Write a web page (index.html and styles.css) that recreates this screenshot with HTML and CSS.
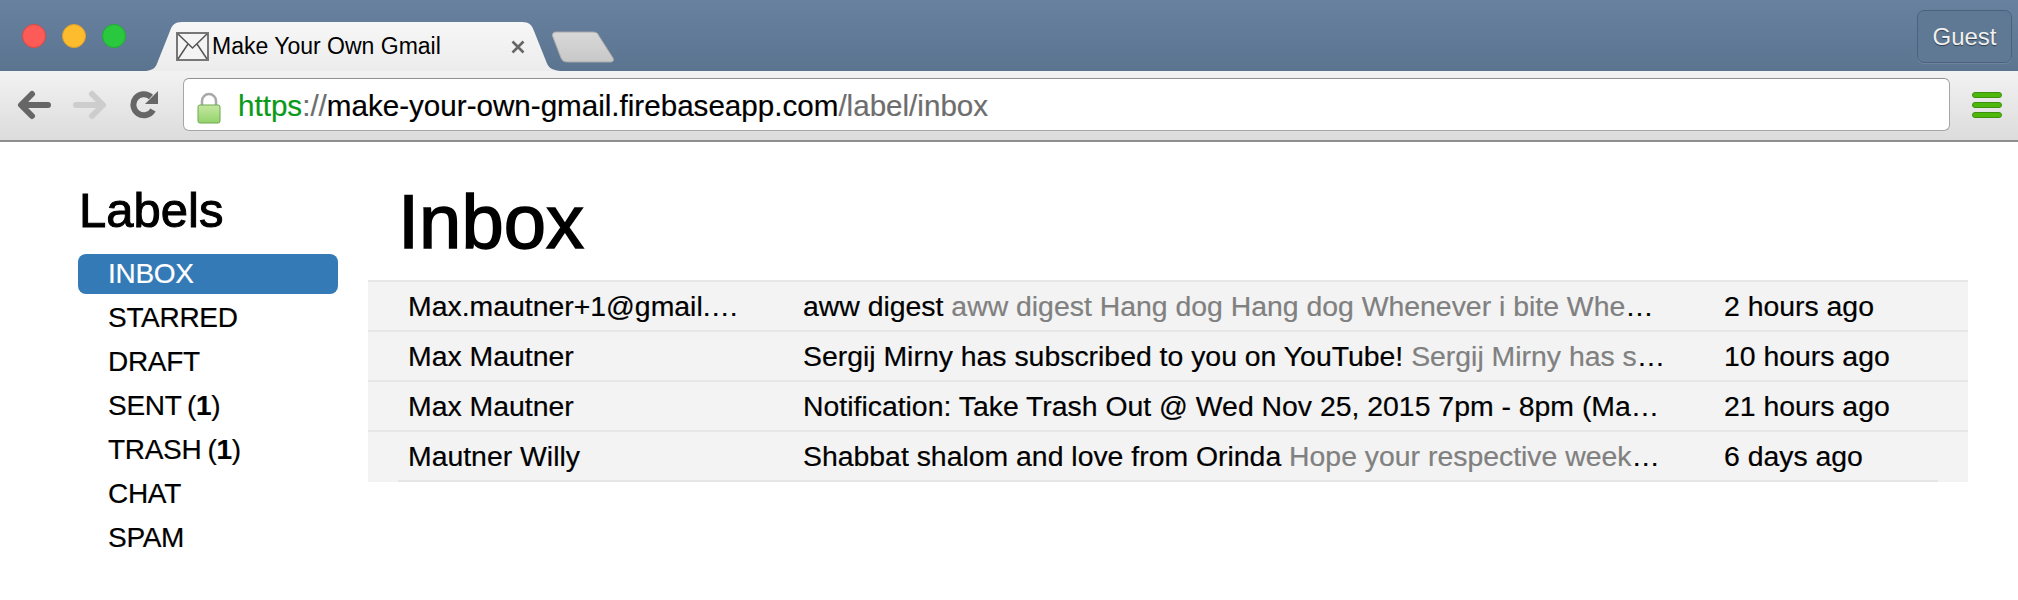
FILE: index.html
```html
<!DOCTYPE html>
<html lang="en">
<head>
    <meta charset="UTF-8">
    <title>Make Your Own Gmail</title>
    <link rel="stylesheet" href="styles.css">
</head>
<body>

    <!-- browser chrome -->
    <div class="tabstrip">
        <div class="traffic">
            <span class="light red"></span>
            <span class="light yellow"></span>
            <span class="light green"></span>
        </div>
        <div class="tab">
            <svg class="tab-shape" width="414" height="49" viewBox="0 0 414 49">
                <defs>
                    <linearGradient id="tabFill" x1="0" y1="0" x2="0" y2="1">
                        <stop offset="0" stop-color="#f7f7f7"/>
                        <stop offset="1" stop-color="#ececec"/>
                    </linearGradient>
                </defs>
                <path d="M0 49 C8 48 10 45 12 39 L24 9 C26 3 29 0 36 0 L376 0 C383 0 386 3 388 9 L400 39 C402 45 405 48 414 49 Z" fill="url(#tabFill)"/>
            </svg>
            <svg class="favicon" width="33" height="29" viewBox="0 0 33 29">
                <rect x="1" y="1" width="31" height="27" fill="#f4f4f4" stroke="#777" stroke-width="2"/>
                <path d="M2 2 L16.500 16 L31 2 M2 27 L12 12 M31 27 L21 12" fill="none" stroke="#555" stroke-width="1.500"/>
            </svg>
            <span class="tab-title">Make Your Own Gmail</span>
            <svg class="tab-close" width="14" height="14" viewBox="0 0 14 14">
                <path d="M1.500 1.500 L12.500 12.500 M12.500 1.500 L1.500 12.500" stroke="#666" stroke-width="2.600"/>
            </svg>
        </div>
        <svg class="newtab" width="64" height="32" viewBox="0 0 64 32">
            <defs>
                <linearGradient id="newTabFill" x1="0" y1="0" x2="0" y2="1">
                    <stop offset="0" stop-color="#d8d8d8"/>
                    <stop offset="1" stop-color="#c8c8c8"/>
                </linearGradient>
            </defs>
            <path d="M1.500 5 C1 2.500 2.500 1 5 1 L42 1 C45 1 47 2 48 5 L62 27 C63 30 62 31 59 31 L17 31 C13 31 11.500 30 10 27 Z" fill="url(#newTabFill)" stroke="#a9a9a9" stroke-width="1"/>
        </svg>
        <div class="guest">Guest</div>
    </div>

    <div class="toolbar">
        <svg class="nav-icon back" width="34" height="30" viewBox="0 0 34 30">
            <path d="M31 15 L6 15 M15 4 L4 15 L15 26" fill="none" stroke="#666" stroke-width="6" stroke-linecap="round" stroke-linejoin="round"/>
        </svg>
        <svg class="nav-icon forward" width="34" height="30" viewBox="0 0 34 30">
            <path d="M3 15 L28 15 M19 4 L30 15 L19 26" fill="none" stroke="#cdcdcd" stroke-width="6" stroke-linecap="round" stroke-linejoin="round"/>
        </svg>
        <svg class="nav-icon reload" width="30" height="32" viewBox="0 0 30 32">
            <path d="M23 21 A10.500 10.500 0 1 1 21 8" fill="none" stroke="#666" stroke-width="6"/>
            <path d="M28 2 L28 15 L15 15 Z" fill="#666"/>
        </svg>
        <div class="omnibox">
            <svg class="lock" width="24" height="32" viewBox="0 0 24 32">
                <defs>
                    <linearGradient id="lockFill" x1="0" y1="0" x2="0" y2="1">
                        <stop offset="0" stop-color="#c4e8a0"/>
                        <stop offset="1" stop-color="#94d36c"/>
                    </linearGradient>
                </defs>
                <path d="M5 14 L5 9 A7 7 0 0 1 19 9 L19 14" fill="none" stroke="#a9a9a9" stroke-width="2.500"/>
                <rect x="1" y="13" width="22" height="18" rx="2" fill="url(#lockFill)" stroke="#6fa850"/>
            </svg>
            <span class="url"><span class="url-https">https</span><span class="url-dim">://</span>make-your-own-gmail.firebaseapp.com<span class="url-dim">/label/inbox</span></span>
        </div>
        <div class="menu">
            <span></span>
            <span></span>
            <span></span>
        </div>
    </div>

    <!-- the app -->
    <div class="page">
        <div class="sidebar">
            <h3>Labels</h3>
            <ul class="labels">
                <li class="active">INBOX</li>
                <li>STARRED</li>
                <li>DRAFT</li>
                <li>SENT (<b>1</b>)</li>
                <li>TRASH (<b>1</b>)</li>
                <li>CHAT</li>
                <li>SPAM</li>
            </ul>
        </div>
        <div class="content">
            <h1>Inbox</h1>
            <div class="threads">
                <div class="thread">
                    <div class="sender">Max.mautner+1@gmail.com</div>
                    <div class="subject">aww digest <span class="snippet">aww digest Hang dog Hang dog Whenever i bite Whenever i bite my tongue</span></div>
                    <div class="time">2 hours ago</div>
                </div>
                <div class="thread">
                    <div class="sender">Max Mautner</div>
                    <div class="subject">Sergij Mirny has subscribed to you on YouTube! <span class="snippet">Sergij Mirny has subscribed to you on YouTube</span></div>
                    <div class="time">10 hours ago</div>
                </div>
                <div class="thread">
                    <div class="sender">Max Mautner</div>
                    <div class="subject">Notification: Take Trash Out @ Wed Nov 25, 2015 7pm - 8pm (Max Mautner)</div>
                    <div class="time">21 hours ago</div>
                </div>
                <div class="thread">
                    <div class="sender">Mautner Willy</div>
                    <div class="subject">Shabbat shalom and love from Orinda <span class="snippet">Hope your respective weekends are going well</span></div>
                    <div class="time">6 days ago</div>
                </div>
            </div>
        </div>
    </div>

</body>
</html>
```

FILE: styles.css
```css
* { margin: 0; padding: 0; box-sizing: border-box; }

body {
    background: #fff;
    color: #000;
    font-family: "Liberation Sans", Arial, sans-serif;
    overflow: hidden;
}

/* --- BROWSER CHROME --- */
.tabstrip {
    height: 71px;
    display: flex;
    background: linear-gradient(#67819f, #5b7490);
}

.traffic {
    display: flex;
    gap: 16px;
    padding: 24px 0 0 22px;
    width: 146px;
}

.light {
    width: 24px;
    height: 24px;
    border-radius: 50%;
}
.red { background: #fc5b57; border: 1px solid #e2463f; }
.yellow { background: #fdbc2e; border: 1px solid #e0a028; }
.green { background: #2ac83f; border: 1px solid #1fae2e; }

.tab {
    position: relative;
    width: 414px;
    height: 49px;
    margin-top: 22px;
    display: flex;
    align-items: center;
    padding-left: 30px;
    flex-shrink: 0;
}

.tab-shape { position: absolute; left: 0; top: 0; }

.favicon, .tab-title, .tab-close { position: relative; }

.tab-title {
    margin-left: 3px;
    width: 299px;
    font-size: 23px;
    white-space: nowrap;
}

.newtab { margin: 31px 0 0 -9px; flex-shrink: 0; }

.guest {
    margin: 10px 6px 0 auto;
    width: 95px;
    height: 53px;
    line-height: 51px;
    text-align: center;
    font-size: 24px;
    color: #f0f0f0;
    border: 1px solid #4a627e;
    border-radius: 7px;
    background: #5f7994;
    box-shadow: 0 1px 0 rgba(255, 255, 255, 0.12);
    text-shadow: 0 1px 1px rgba(0, 0, 0, 0.5);
}

.toolbar {
    height: 71px;
    display: flex;
    align-items: center;
    padding: 0 16px 2px 17px;
    background: linear-gradient(#f2f2f2, #dcdcdc);
    border-bottom: 2px solid #8e8e8e;
}

.nav-icon { flex-shrink: 0; }
.back { margin-right: 22px; }
.forward { margin-right: 23px; }
.reload { margin-right: 23px; }

.omnibox {
    width: 1767px;
    height: 53px;
    display: flex;
    align-items: center;
    padding-left: 13px;
    background: #fff;
    border: 1px solid #a6a6a6;
    border-top-color: #8f8f8f;
    border-radius: 6px;
}

.lock { flex-shrink: 0; margin-top: 6px; }

.url {
    margin: 2px 0 0 17px;
    font-size: 29.6px;
    white-space: nowrap;
    -webkit-text-stroke: 0.2px;
}
.url-https { color: #0a9a1a; }
.url-dim { color: #6d6d6d; }

.menu {
    margin-left: 22px;
    display: flex;
    flex-direction: column;
    gap: 4px;
}
.menu span {
    display: block;
    width: 30px;
    height: 6px;
    border-radius: 3px;
    background: #4db80a;
    border: 1px solid #3f8f10;
}

/* --- APP --- */
.page {
    display: flex;
    padding: 0 50px 0 78px;
}

.sidebar {
    width: 260px;
    flex-shrink: 0;
    margin-right: 30px;
}

.sidebar h3 {
    font-size: 49px;
    font-weight: 400;
    line-height: 52px;
    margin: 42px 0 18px 1px;
    -webkit-text-stroke: 1px;
}

.labels { list-style: none; }

.labels li {
    height: 40px;
    line-height: 40px;
    padding-left: 30px;
    margin-bottom: 4px;
    font-size: 28px;
    letter-spacing: -0.3px;
    word-spacing: -1.5px;
    border-radius: 8px;
    -webkit-text-stroke: 0.2px;
}

.labels li.active {
    background: #337ab7;
    color: #fff;
}

.content { flex: 1; min-width: 0; }

.content h1 {
    font-size: 76px;
    font-weight: 400;
    line-height: 80px;
    margin: 40px 0 18px 30px;
    -webkit-text-stroke: 1.5px;
}

.threads {
    background: #f3f3f3;
}

.thread {
    display: flex;
    height: 50px;
    align-items: center;
    padding: 0 0 0 40px;
    border-top: 2px solid #e6e6e6;
    font-size: 28.4px;
    -webkit-text-stroke: 0.2px;
}

.sender, .subject {
    white-space: nowrap;
    overflow: hidden;
    text-overflow: ellipsis;
    flex-shrink: 0;
}

.sender { width: 334px; margin-right: 61px; }
.subject { width: 863px; margin-right: 58px; }
.snippet { color: #808080; }
.time { white-space: nowrap; }

/* bottom rule is inset from the grey block */
.threads::after {
    content: "";
    display: block;
    height: 2px;
    margin: 0 30px;
    background: #e6e6e6;
}
```
